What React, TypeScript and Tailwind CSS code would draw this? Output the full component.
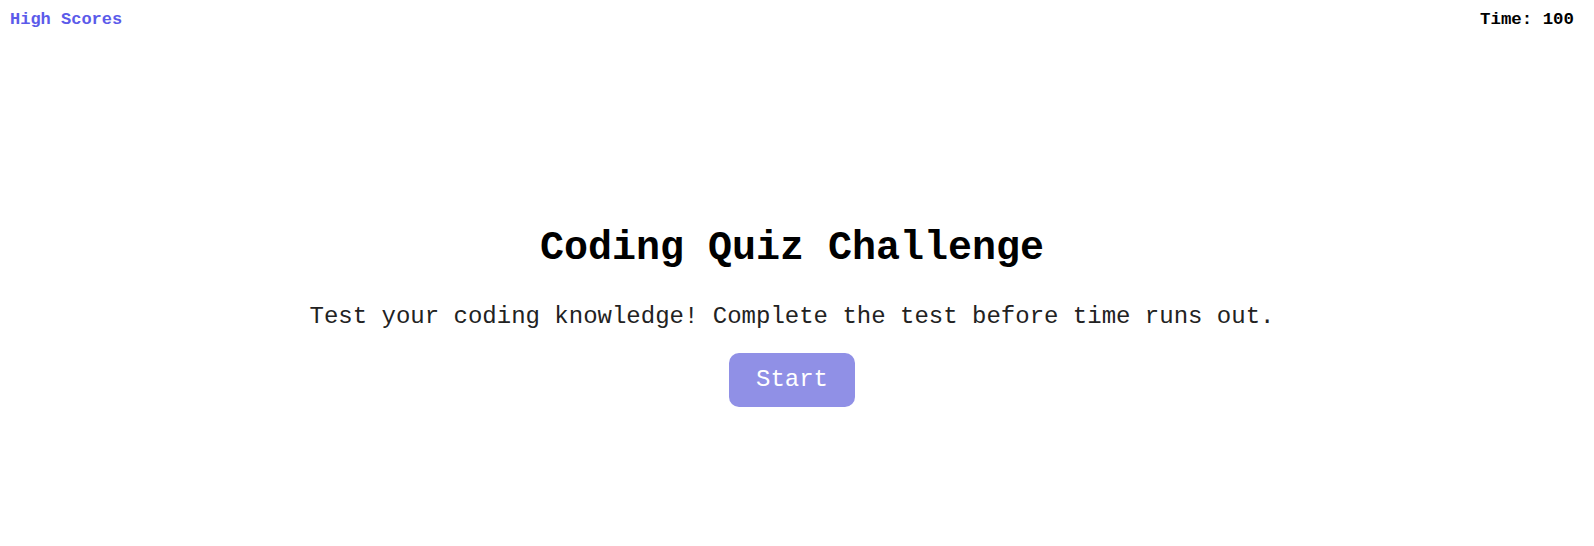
export default function App() {
  return (
    <div className="min-h-[546px] bg-white text-black" style={{ fontFamily: '"Liberation Mono", "Courier New", monospace' }}>
      <header className="flex justify-between items-center pl-[10px] pr-[20px] pt-[10px] text-[17px] font-bold leading-[20px]">
        <a href="#" className="text-[#5b5bea]">High Scores</a>
        <span className="text-[17.4px]">Time: 100</span>
      </header>
      <main className="flex flex-col items-center pt-[196px] pr-[10px]">
        <h1 className="text-[40px] font-bold leading-[45px]">Coding Quiz Challenge</h1>
        <p className="mt-[32px] text-[24px] leading-[27px] text-[#222]">
          Test your coding knowledge! Complete the test before time runs out.
        </p>
        <button className="mt-[23px] rounded-[10px] bg-[#9090e6] px-[27px] py-[13px] text-[24px] leading-[28px] text-white">
          Start
        </button>
      </main>
    </div>
  );
}
